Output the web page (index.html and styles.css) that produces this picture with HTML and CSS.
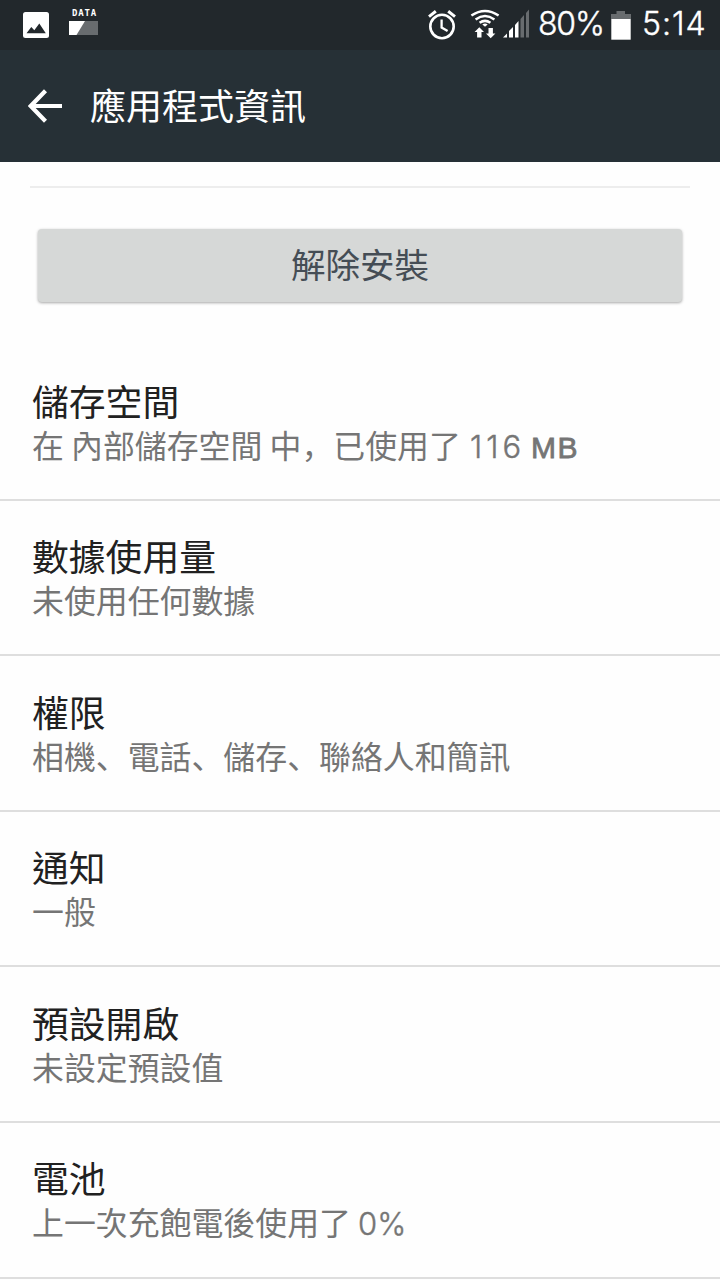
FILE: index.html
```html
<!DOCTYPE html>
<html lang="zh-Hant">
<head>
    <meta charset="UTF-8">
    <meta name="viewport" content="width=device-width, initial-scale=1.0">
    <title>應用程式資訊</title>
    <link rel="stylesheet" href="styles.css">
</head>
<body>
    <div class="status-bar">
        <div class="status-left">
            <svg class="icon-picture" width="26" height="26" viewBox="0 0 26 26">
                <rect width="26" height="26" rx="2.5" fill="#fff"/>
                <path d="M3.5 21.3L8.3 15l3 3.3 5-6.8 6.5 9.8z" fill="#22282c"/>
            </svg>
            <div class="data">
                <span class="data-label">DATA</span>
                <svg width="29" height="14" viewBox="0 0 29 14">
                    <rect width="29" height="14" fill="#686c6f"/>
                    <path d="M0 0h16L7.500 14H0z" fill="#fff"/>
                </svg>
            </div>
        </div>
        <div class="status-right">
            <svg class="icon-alarm" width="28" height="30" viewBox="0 0 28 30" fill="none" stroke="#fff">
                <circle cx="14" cy="16.500" r="11.700" stroke-width="2.600"/>
                <path d="M1 6.600l6.800-5.300M27 6.600l-6.800-5.300" stroke-width="3"/>
                <path d="M13.600 9.500v8l6 3.600" stroke-width="2.300"/>
            </svg>
            <svg class="icon-wifi" width="30" height="30" viewBox="0 0 30 30">
                <g fill="none" stroke="#fff" stroke-width="2.500">
                    <path d="M1.400 6.500Q15-2.500 28.600 6.500"/>
                    <path d="M5.600 10.400Q15 3.700 24.400 10.400"/>
                    <path d="M9.600 13.800Q15 9.900 20.400 13.800"/>
                </g>
                <path d="M12.300 15.400Q15 13.500 17.700 15.400L15 17.700z" fill="#fff"/>
                <path d="M9.300 18.200l4.700 4.900h-2.500v5.500H7.100v-5.500H4.600z" fill="#fff"/>
                <path d="M20.700 29.300l-4.700-4.900h2.500v-5.500h4.400v5.500h2.500z" fill="#fff"/>
            </svg>
            <svg class="icon-signal" width="27" height="29" viewBox="0 0 27 29">
                <path d="M0 28.500l4-4v4zM6 28.500v-6.500l4-4v10.500zM12 28.500V16l3.500-4v16.500z" fill="#fff"/>
                <path d="M17.500 28.500V10L21 6v22.500zM23 28.500V4l3-3.500v28z" fill="#686c6f"/>
            </svg>
            <span class="percent">80%</span>
            <svg class="icon-battery" width="20" height="29" viewBox="0 0 20 29">
                <path d="M0 3h5.500V0h8.500v3h6v5H0z" fill="#686c6f"/>
                <path d="M.3 8h19.400v20.700H.3z" fill="#fff"/>
            </svg>
            <span class="clock">5:14</span>
        </div>
    </div>

    <header class="app-bar">
        <svg class="back" width="34" height="34" viewBox="0 0 34 34" fill="none" stroke="#fff" stroke-width="4.200">
            <path d="M17.500 1.800L2.800 17l14.700 15.200M3 17h31"/>
        </svg>
        <h1>應用程式資訊</h1>
    </header>

    <main>
        <div class="action">
            <button class="uninstall">解除安裝</button>
        </div>
        <ul class="list">
            <li class="item">
                <h2>儲存空間</h2>
                <p>在 內部儲存空間 中<span class="mark" lang="zh-Hans">，</span>已使用了 <span class="num size">116</span><span class="unit">MB</span></p>
            </li>
            <li class="item">
                <h2>數據使用量</h2>
                <p>未使用任何數據</p>
            </li>
            <li class="item">
                <h2>權限</h2>
                <p>相機<span class="mark" lang="zh-Hans">、</span>電話<span class="mark" lang="zh-Hans">、</span>儲存<span class="mark" lang="zh-Hans">、</span>聯絡人和簡訊</p>
            </li>
            <li class="item">
                <h2>通知</h2>
                <p>一般</p>
            </li>
            <li class="item">
                <h2>預設開啟</h2>
                <p>未設定預設值</p>
            </li>
            <li class="item">
                <h2>電池</h2>
                <p>上一次充飽電後使用了 <span class="num">0%</span></p>
            </li>
        </ul>
    </main>
</body>
</html>
```
FILE: styles.css
```css
* {
    margin: 0;
    padding: 0;
    box-sizing: border-box;
}

body {
    width: 720px;
    height: 1280px;
    overflow: hidden;
    background: #fefefe;
    color: #212121;
    font-family: "Noto Sans CJK TC", sans-serif;
}

svg {
    display: block;
    flex: none;
}

.status-bar {
    height: 50px;
    padding: 0 15px 0 23px;
    display: flex;
    justify-content: space-between;
    background: #22282c;
    color: #fff;
    font-family: Inter, sans-serif;
}

.status-left,
.status-right {
    display: flex;
    align-items: flex-start;
}

.icon-picture {
    margin: 12px 20px 0 0;
}

.data-label {
    display: block;
    height: 12px;
    margin: 9px 0 0 3px;
    font: 700 9px/9px "DejaVu Sans Mono", monospace;
    letter-spacing: 0.8px;
}

.icon-alarm {
    margin: 10px 14px 0 0;
}

.icon-wifi {
    margin: 9px 3px 0 0;
}

.icon-signal {
    margin: 9px 8px 0 0;
}

.percent,
.clock {
    font-size: 32px;
    font-weight: 300;
    line-height: 48px;
    white-space: nowrap;
    -webkit-text-stroke: 0.4px #fff;
}

.percent {
    width: 65px;
    letter-spacing: -1.2px;
}

.icon-battery {
    margin: 11px 11px 0 8px;
}

.clock {
    width: 63px;
    letter-spacing: 1px;
}

.app-bar {
    height: 112px;
    padding-left: 28px;
    display: flex;
    align-items: center;
    gap: 28px;
    background: #263036;
    color: #fff;
}

.app-bar h1 {
    padding-bottom: 5px;
    font-size: 36px;
    font-weight: 400;
    line-height: 48px;
}

.action {
    height: 159px;
    margin: 24px 30px 0;
    padding: 41px 8px 0;
    border-top: 2px solid #ededed;
}

.uninstall {
    display: block;
    width: 100%;
    height: 73px;
    padding-bottom: 5px;
    border: none;
    border-radius: 4px;
    background: #d6d8d7;
    box-shadow: 0 1px 3px rgba(0, 0, 0, 0.35);
    color: #454d55;
    font: 400 34.5px/48px "Noto Sans CJK TC", sans-serif;
}

.list {
    list-style: none;
}

.item {
    height: 155.6px;
    padding: 30.5px 32px 0;
    border-bottom: 2px solid #dedede;
}

.item h2 {
    font-size: 36.8px;
    font-weight: 400;
    line-height: 48px;
}

.item p {
    color: #757575;
    font-size: 31.9px;
    font-weight: 400;
    line-height: 41px;
    white-space: nowrap;
}

.mark {
    font-family: "Noto Sans CJK SC", sans-serif;
}

.num {
    font-family: Inter, sans-serif;
    font-size: 31px;
    font-weight: 300;
    -webkit-text-stroke: 0.4px #757575;
}

.size {
    margin-left: 2px;
    letter-spacing: 4px;
}

.unit {
    margin-left: 6px;
    font-family: "Liberation Sans", sans-serif;
    font-size: 30px;
    letter-spacing: 1.5px;
    -webkit-text-stroke: 0.8px #757575;
}
```
